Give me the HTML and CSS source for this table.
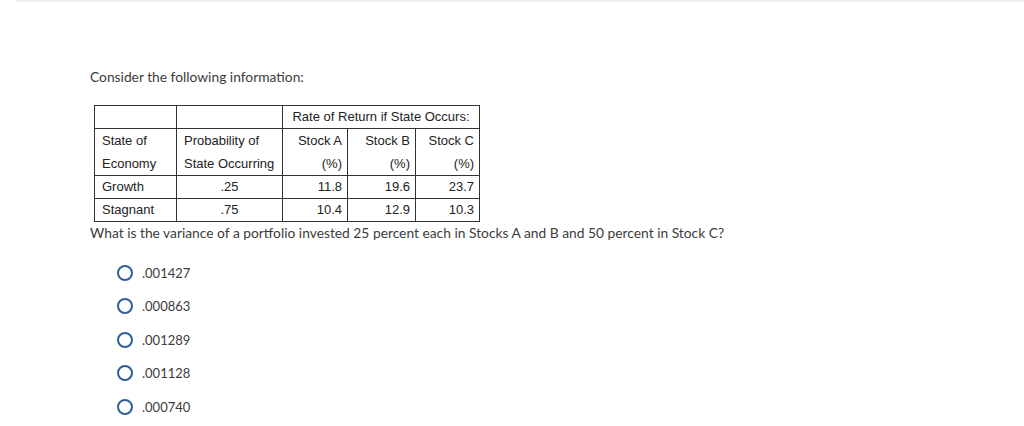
FILE: index.html
```html
<!DOCTYPE html>
<html>
<head>
<meta charset="utf-8">
<link rel="stylesheet" href="styles.css">
</head>
<body>
<div class="topline"></div>
<main class="question">
  <p class="intro">Consider the following information:</p>
  <table class="data">
    <colgroup>
      <col class="w1"><col class="w2"><col class="w3"><col class="w4"><col class="w5">
    </colgroup>
    <tr>
      <td></td>
      <td></td>
      <td class="ctr" colspan="3">Rate of Return if State Occurs:</td>
    </tr>
    <tr class="nob">
      <td>State of</td>
      <td>Probability of</td>
      <td class="r">Stock A</td>
      <td class="r">Stock B</td>
      <td class="r">Stock C</td>
    </tr>
    <tr>
      <td>Economy</td>
      <td>State Occurring</td>
      <td class="r">(%)</td>
      <td class="r">(%)</td>
      <td class="r">(%)</td>
    </tr>
    <tr>
      <td>Growth</td>
      <td class="ctr">.25</td>
      <td class="r">11.8</td>
      <td class="r">19.6</td>
      <td class="r">23.7</td>
    </tr>
    <tr>
      <td>Stagnant</td>
      <td class="ctr">.75</td>
      <td class="r">10.4</td>
      <td class="r">12.9</td>
      <td class="r">10.3</td>
    </tr>
  </table>
  <p class="prompt">What is the variance of a portfolio invested 25 percent each in Stocks A and B and 50 percent in Stock C?</p>
  <ul class="options">
    <li><span class="radio"></span>.001427</li>
    <li><span class="radio"></span>.000863</li>
    <li><span class="radio"></span>.001289</li>
    <li><span class="radio"></span>.001128</li>
    <li><span class="radio"></span>.000740</li>
  </ul>
</main>
</body>
</html>
```

FILE: styles.css
```css
html, body {
  margin: 0;
  padding: 0;
  background: #fff;
}
.topline {
  margin-left: 16px;
  height: 2px;
  background: #f1f1f1;
}
.question {
  padding-left: 90px;
  font-family: Lato, "Open Sans", sans-serif;
  color: #3c3c3c;
  font-size: 13.8px;
}
.intro {
  margin: 0;
  padding-top: 66px;
  line-height: 18px;
}
.data {
  margin: 19px 0 0 4px;
  border-collapse: collapse;
  table-layout: fixed;
  width: 385px;
  font-family: "Liberation Sans", Arial, sans-serif;
  font-size: 13px;
  color: #222;
}
.data .w1 { width: 82px; }
.data .w2 { width: 106px; }
.data .w3 { width: 65px; }
.data .w4 { width: 68px; }
.data .w5 { width: 64px; }
.data td {
  border: 1px solid #333;
  height: 22px;
  padding: 0 4px 0 7px;
  line-height: 22px;
  white-space: nowrap;
  vertical-align: middle;
}
.data tr.nob td { border-bottom: none; height: 23px; }
.data tr.nob + tr td { border-top: none; height: 23px; }
.data td.r { text-align: right; padding: 0 5px 0 2px; }
.data td.ctr { text-align: center; padding: 0 2px; }
.prompt {
  margin: 2px 0 0;
  line-height: 18px;
}
.options {
  list-style: none;
  margin: 14px 0 0;
  padding: 0 0 0 27px;
  font-size: 13px;
}
.options li {
  display: flex;
  align-items: center;
  height: 33.5px;
}
.radio {
  width: 12px;
  height: 12px;
  border: 2px solid #2e5f99;
  border-radius: 50%;
  margin-right: 9px;
}
```
